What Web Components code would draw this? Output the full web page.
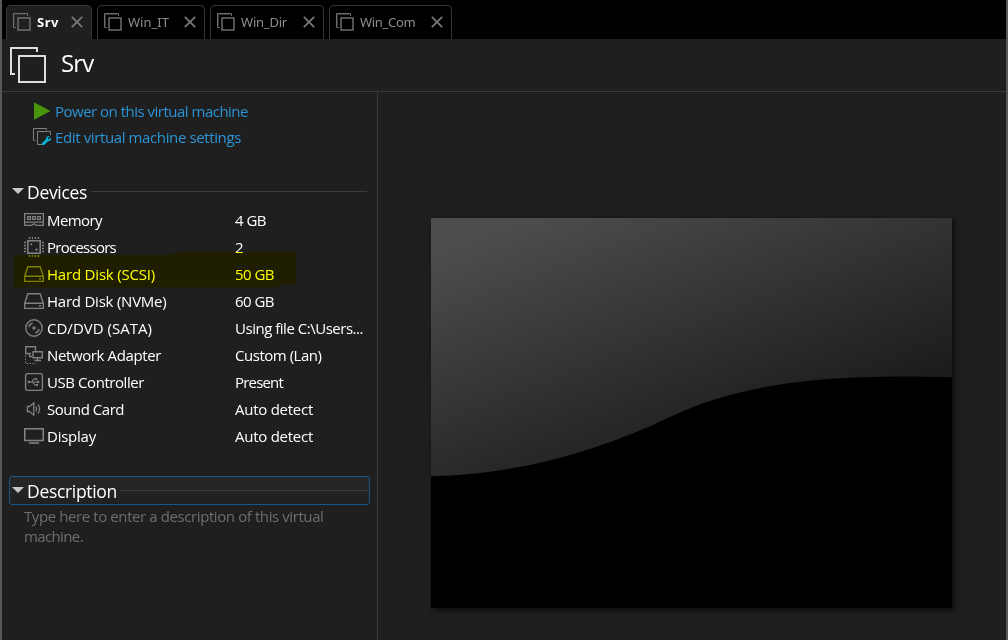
<!DOCTYPE html>
<html lang="en">
<head>
<meta charset="utf-8">
<title>Srv</title>
<style>
html,body{margin:0;height:100%;background:#1f1f1f;overflow:hidden}
body{font-family:"Open Sans","Noto Sans",sans-serif;font-size:15px;color:#fff}
</style>
</head>
<body>
<vm-app></vm-app>
<script>
const define = (name, html, setup) => {
  const t = document.createElement('template');
  t.innerHTML = html;
  customElements.define(name, class extends HTMLElement {
    connectedCallback() {
      if (this.shadowRoot) return;
      this.attachShadow({mode: 'open'}).appendChild(t.content.cloneNode(true));
      if (setup) setup(this, this.shadowRoot);
    }
  });
};

const g = 'fill="none" stroke="#808080"';
const ICONS = {
  vm: [18,18,`<g fill="none" stroke="#6e6e6e"><path d="M14.5 3V.5H.5V14.5H3"/><path d="M1.5 13V1.5H13" stroke="#343434"/><rect x="5" y="5" width="12" height="12" stroke-width="1.5"/></g>`],
  vmlarge: [37,37,`<g fill="none" stroke="#dedede" stroke-width="2"><path d="M27 5V1H1V27H5"/><rect x="9" y="9" width="26" height="26"/></g>`],
  close: [12,12,`<path d="M.8.8 11.2 11.2M11.2.8.8 11.2" stroke="#777" stroke-width="1.8" fill="none"/>`],
  play: [20,20,`<path d="M1 1.2 17.5 10 1 18.8z" fill="#48940d"/>`],
  edit: [20,20,`<g fill="none" stroke="#808080"><path d="M13.5 3V1.5H.5V13.5H2.5"/><path d="M9 17.5H4.5V4.5H17.5V8"/></g><path d="M17.9 10.4 15.6 12.5 14.6 11.4 16.7 9.2C14.6 8.7 12.7 10.2 13 12.3L8.8 16.3C8.4 17.4 9.6 18.8 10.9 18.2L15 14.2C17.1 14.4 18.4 12.5 17.9 10.4z" fill="#08b5d8"/>`],
  arrow: [12,6,`<path d="M0 0H12L6 6z" fill="#c8c8c8"/>`],
  memory: [20,20,`<g ${g} stroke-width="1.3"><path d="M.6 3.7H19.4V15.4H12.3L10 13.8 7.7 15.4H.6zM.6 12.2H19.4"/><path d="M3.6 6.6h2.8v2.8h-2.8zM8.6 6.6h2.8v2.8h-2.8zM13.6 6.6h2.8v2.8h-2.8z"/></g>`],
  cpu: [20,20,`<g ${g} stroke-width="1.4"><rect x="3.8" y="3.8" width="12.4" height="12.4" stroke-width="1.6"/><path d="M5.5 0V2M8.5 0V2M11.5 0V2M14.5 0V2M5.5 18v2M8.5 18v2M11.5 18v2M14.5 18v2M0 5.5H2M0 8.5H2M0 11.5H2M0 14.5H2M18 5.5h2M18 8.5h2M18 11.5h2M18 14.5h2"/></g><circle cx="7.3" cy="7.3" r="1.1" fill="#808080"/><circle cx="12.5" cy="12.6" r="1.2" fill="#808080"/>`],
  disk: [20,20,`<g ${g} stroke-width="1.4"><path d="M.7 12.3 3.9 2.7H16.1L19.3 12.3V17.4H.7zM.7 12.3H19.3"/><path d="M15 14.8h2"/></g>`],
  cd: [20,20,`<g ${g} stroke-width="1.4"><circle cx="10" cy="10" r="8.2"/><circle cx="10" cy="10" r="1.1"/><path d="M5 9A5.3 5.3 0 0 1 8.6 5M15 11A5.3 5.3 0 0 1 11.4 15"/></g>`],
  net: [20,20,`<g ${g}><path d="M7 8.5H1.7V1.7H11.5V6" stroke-width="1.4"/><path d="M9 6.7H18.3V12.7H9zM13.6 13v2.5M10.5 15.5h6.5M5 11.5H8M5.5 8.5v3" stroke-width="1.4"/><path d="M1.5 10.5V18.5H12" stroke-dasharray="1.5 1.5"/></g>`],
  usb: [20,20,`<g ${g} stroke-width="1.2"><rect x="1.6" y="1.6" width="16.8" height="16.8" rx="1.8" stroke-width="1.4"/><path d="M5 10H14M7.5 10 9.8 7H12M8.6 10 10.8 13H12.5"/></g><g fill="#808080"><circle cx="5" cy="10" r="1.3"/><path d="M13 8.3 16 10 13 11.7zM12 12h2v2h-2z"/><circle cx="12.2" cy="7" r="1.1"/></g>`],
  sound: [20,20,`<g ${g} stroke-width="1.3"><path d="M3.4 7.5H5.5L9.8 3.8V16.2L5.5 12.5H3.4z"/><path d="M11.9 7.5Q13.3 10 11.9 12.5M14 5.4Q17.2 10 14 14.6"/></g>`],
  display: [20,20,`<g ${g}><rect x=".8" y="2.8" width="18.4" height="11.7" stroke-width="1.6"/><path d="M5 17H15" stroke-width="1.6"/></g>`]
};

/* <ui-icon name> draws one glyph of the icon set */
define('ui-icon', `<style>:host{display:block;flex:none}svg{display:block}</style>`, (el, root) => {
  const [w, h, body] = ICONS[el.getAttribute('name')];
  root.innerHTML += `<svg width="${w}" height="${h}" viewBox="0 0 ${w} ${h}">${body}</svg>`;
});

/* <ui-text w> tracks its text to a run length in pixels */
define('ui-text', `<style>:host{display:inline-block;white-space:nowrap}span{display:inline-block}</style><span><slot></slot></span>`, (el, root) => {
  const s = root.querySelector('span'), w = +el.getAttribute('w');
  if (w) s.style.letterSpacing = ((w - s.getBoundingClientRect().width) / el.textContent.length).toFixed(3) + 'px';
});

define('vm-tab', `<style>
:host{display:flex;box-sizing:border-box;height:34px;border:1px solid #363636;border-bottom:0;border-radius:5px 5px 0 0;padding:7px 8px 0 6px;font:13px/18px "Noto Sans",sans-serif;color:#8d8d8d}
:host([active]){background:#1f1f1f;color:#fff;font-weight:700}
.label{margin:0 auto 0 6px}
.x{padding-top:3px}
</style><ui-icon name="vm"></ui-icon><div class="label"><slot></slot></div><ui-icon class="x" name="close"></ui-icon>`);

define('vm-tabs', `<style>:host{display:flex;gap:5px;height:34px;padding:5px 0 0 4px;background:#000}</style><slot></slot>`);

define('vm-header', `<style>
:host{display:flex;height:52px;border-bottom:1px solid #3b3b3b;font-size:24px;line-height:48px}
ui-icon{margin:8px 0 0 8px}
.t{margin-left:14px}
</style><ui-icon name="vmlarge"></ui-icon><div class="t"><slot></slot></div>`);

define('vm-action', `<style>
:host{display:flex;height:26px;line-height:26px;color:#2b94d6;padding-left:31px}
::slotted(ui-icon){width:20px;margin:3px 2px 0 0}
</style><slot name="icon"></slot><slot></slot>`);

define('vm-section', `<style>
:host{display:block;margin:0 7px}
.bar{display:flex;align-items:center;box-sizing:border-box;height:29px;border:1px solid transparent;border-radius:3px;padding:0 2px;font-size:17.5px;line-height:25px}
:host([focused]) .bar{border-color:#17558a;background:linear-gradient(#272727,#202020)}
ui-icon{margin:-1px 3px 0 0}
.title{padding-top:2px}
i{flex:1;height:1px;background:#3c3c3c;margin:0 0 0 4px}
</style><div class="bar"><ui-icon name="arrow"></ui-icon><div class="title"><slot name="title"></slot></div><i></i></div><slot></slot>`);

define('vm-device', `<style>
:host{display:grid;grid-template-columns:20px 185px 1fr;column-gap:3px;height:27px;line-height:27px;padding-left:15px}
::slotted(ui-icon){margin-top:3px}
</style><slot name="icon"></slot><slot></slot>`);

/* Marker stroke laid over a row */
define('vm-marker', `<style>
:host{position:absolute;left:5px;top:45px;width:283px;height:36px;mix-blend-mode:multiply}
svg{display:block}
</style><svg width="283" height="36"><path d="M0 3 150 3 166 0H282V32H271Q262 36 256 35.6H0z" fill="#ff0"/></svg>`);

define('vm-preview', `<style>
:host{display:block;width:521px;height:390px;background:#000;box-shadow:2px 2px 6px rgba(0,0,0,.75)}
svg{display:block}
</style><svg width="521" height="390" viewBox="0 0 521 390">
<defs><linearGradient id="s" gradientUnits="userSpaceOnUse" x1="14" y1="37" x2="121" y2="312"><stop offset="0" stop-color="#4c4c4c"/><stop offset="1" stop-color="#1b1b1b"/></linearGradient></defs>
<path d="M0 0H521V159.3C384 155 304 168 239 199 164 235 81 257 0 258.3z" fill="url(#s)"/></svg>`);

const devices = [
  ['memory','Memory',55,'4 GB',31],['cpu','Processors',69,'2',8],
  ['disk','Hard Disk (SCSI)',108,'50 GB',39],['disk','Hard Disk (NVMe)',119.5,'60 GB',39],
  ['cd','CD/DVD (SATA)',105,'Using file C:\\Users...',128],['net','Network Adapter',114,'Custom (Lan)',86.5],
  ['usb','USB Controller',97,'Present',48],['sound','Sound Card',77,'Auto detect',78],
  ['display','Display',49,'Auto detect',78]
].map(([i,a,w,b,v]) => `<vm-device><ui-icon slot="icon" name="${i}"></ui-icon><div><ui-text w="${w}">${a}</ui-text></div><div><ui-text w="${v}">${b}</ui-text></div></vm-device>`).join('');

define('vm-app', `<style>
:host{display:flex;flex-direction:column;box-sizing:border-box;height:640px;border:solid #585858;border-width:0 2px;background:#1f1f1f}
main{display:flex;flex:1}
aside{box-sizing:border-box;width:376px;border-right:1px solid #3b3b3b;padding-top:6px}
.preview{padding:126px 0 0 53px}
.gap{margin-top:27px}
.list{position:relative;padding-top:1px}
.desc{margin-top:26px}
p{margin:1px 0 0;padding-left:15px;line-height:20px;color:#6e6e6e}
vm-marker{top:46px}
</style>
<vm-tabs>
<vm-tab active style="width:86px"><ui-text w="22">Srv</ui-text></vm-tab>
<vm-tab style="width:108px"><ui-text w="41">Win_IT</ui-text></vm-tab>
<vm-tab style="width:114px"><ui-text w="46">Win_Dir</ui-text></vm-tab>
<vm-tab style="width:123px"><ui-text w="55.5">Win_Com</ui-text></vm-tab>
</vm-tabs>
<vm-header><ui-text w="32.5">Srv</ui-text></vm-header>
<main>
<aside>
<vm-action><ui-icon slot="icon" name="play"></ui-icon><ui-text w="193">Power on this virtual machine</ui-text></vm-action>
<vm-action><ui-icon slot="icon" name="edit"></ui-icon><ui-text w="186">Edit virtual machine settings</ui-text></vm-action>
<vm-section class="gap"><ui-text slot="title" w="60">Devices</ui-text>
<div class="list">${devices}<vm-marker></vm-marker></div></vm-section>
<vm-section class="desc" focused><ui-text slot="title" w="90">Description</ui-text>
<p><ui-text w="299.5">Type here to enter a description of this virtual</ui-text><br><ui-text w="59">machine.</ui-text></p></vm-section>
</aside>
<div class="preview"><vm-preview></vm-preview></div>
</main>`);
</script>
</body>
</html>
